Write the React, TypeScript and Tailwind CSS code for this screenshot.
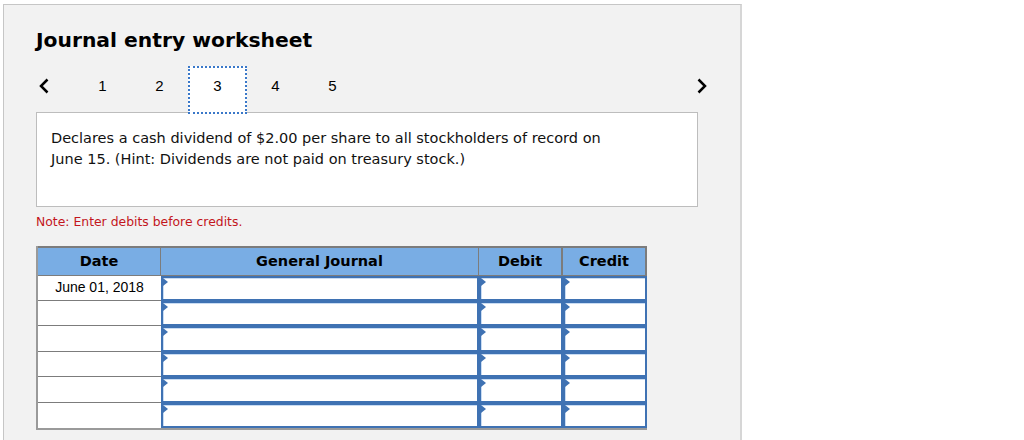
import React from 'react'

const verdana = { fontFamily: '"DejaVu Sans", Verdana, sans-serif' }
const arial = { fontFamily: '"Liberation Sans", Arial, sans-serif' }

const Chevron = ({ dir }: { dir: 'left' | 'right' }) => (
  <svg width="12" height="16" viewBox="0 0 12 16" className="text-black">
    {dir === 'left' ? (
      <polyline points="9.5,1.5 3,8 9.5,14.5" fill="none" stroke="currentColor" strokeWidth="2.5" />
    ) : (
      <polyline points="2.5,1.5 9,8 2.5,14.5" fill="none" stroke="currentColor" strokeWidth="2.5" />
    )}
  </svg>
)

const InputCell = () => (
  <div className="relative h-full border-2 border-[#3f72b3] bg-white shadow-[inset_1px_1px_0_#c9dcf3]">
    <span className="absolute left-0 top-0 h-0 w-0 border-y-[4px] border-l-[5px] border-y-transparent border-l-[#3f72b3]" />
  </div>
)

export default function App() {
  const rows = ['June 01, 2018', '', '', '', '', '']

  return (
    <div className="h-[440px] w-[1024px] overflow-hidden bg-white">
      <div className="ml-[3px] mt-[4px] h-[460px] w-[739px] border border-r-2 border-[#c6c6c6] border-r-[#d6d6d6] bg-[#f2f2f2] pl-[32px] pt-[22px]">
        <h1 className="text-[20.3px] font-bold leading-[26px] text-black" style={verdana}>
          Journal entry worksheet
        </h1>

        {/* step navigation */}
        <div className="relative z-10 -mb-[2px] mt-[13px] flex h-[48px] w-[672px] items-start pt-[11px]" style={arial}>
          <button className="flex w-[38px] items-center pl-[2px] pt-[1px]">
            <Chevron dir="left" />
          </button>
          {[1, 2, 3, 4, 5].map((n) =>
            n === 3 ? (
              <div
                key={n}
                className="-mt-[11px] flex h-[48px] w-[59px] justify-center border-2 border-dotted border-[#3a78c9] bg-white pt-[9px] text-[15px] leading-[18px] text-black"
              >
                {n}
              </div>
            ) : (
              <div key={n} className="flex w-[57px] justify-center text-[15px] leading-[18px] text-black">
                {n}
              </div>
            )
          )}
          <div className="flex-1" />
          <button className="flex items-center pt-[1px]">
            <Chevron dir="right" />
          </button>
        </div>

        {/* question */}
        <div
          className="h-[95px] w-[662px] border border-[#bdbdbd] bg-white pl-[14px] pr-4 pt-[15px] text-[14.5px] leading-[21px] text-[#111]"
          style={verdana}
        >
          Declares a cash dividend of $2.00 per share to all stockholders of record on
          <br />
          June 15. (Hint: Dividends are not paid on treasury stock.)
        </div>

        <p className="mt-[7px] text-[12.4px] leading-[16px] text-[#c3161c]" style={verdana}>
          Note: Enter debits before credits.
        </p>

        {/* journal table */}
        <div className="mt-[16px] w-[611px] border-b-2 border-l-2 border-[#9a9a9a]">
          <div
            className="grid h-[29px] grid-cols-[123px_318px_84px_84px] border-t-2 border-[#7c7c7c] bg-[#79ade4] text-[14.5px] font-bold text-black"
            style={verdana}
          >
            <div className="flex items-center justify-center border-r border-[#7c7c7c]">Date</div>
            <div className="flex items-center justify-center border-r border-[#7c7c7c]">General Journal</div>
            <div className="flex items-center justify-center border-r-2 border-[#7c7c7c]">Debit</div>
            <div className="flex items-center justify-center border-r-2 border-[#7c7c7c]">Credit</div>
          </div>
          {rows.map((date, i) => (
            <div
              key={i}
              className={`grid h-[25.5px] grid-cols-[123px_318px_84px_84px] ${i === 0 ? 'border-t border-[#7c7c7c]' : ''}`}
            >
              <div
                className={`flex items-center justify-center bg-white text-[14px] text-black ${i < rows.length - 1 ? 'border-b border-[#7c7c7c]' : ''}`}
                style={arial}
              >
                {date}
              </div>
              <InputCell />
              <InputCell />
              <InputCell />
            </div>
          ))}
        </div>
      </div>
    </div>
  )
}
